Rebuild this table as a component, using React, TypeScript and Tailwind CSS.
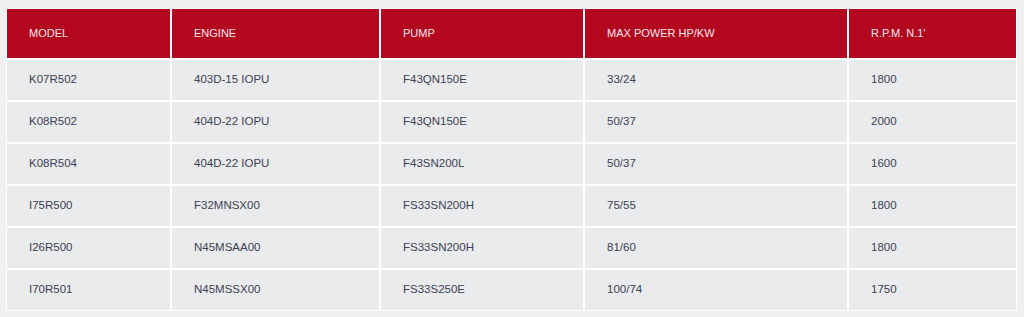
import React from "react";

const headers = ["MODEL", "ENGINE", "PUMP", "MAX POWER HP/KW", "R.P.M. N.1'"];
const rows = [
  ["K07R502", "403D-15 IOPU", "F43QN150E", "33/24", "1800"],
  ["K08R502", "404D-22 IOPU", "F43QN150E", "50/37", "2000"],
  ["K08R504", "404D-22 IOPU", "F43SN200L", "50/37", "1600"],
  ["I75R500", "F32MNSX00", "FS33SN200H", "75/55", "1800"],
  ["I26R500", "N45MSAA00", "FS33SN200H", "81/60", "1800"],
  ["I70R501", "N45MSSX00", "FS33S250E", "100/74", "1750"],
];

export default function App() {
  return (
    <div
      className="min-h-screen w-full bg-[#f0f0f1] pl-[6px] pt-[8px]"
      style={{ fontFamily: '"Liberation Sans", Arial, sans-serif' }}
    >
      <div className="inline-block border border-white bg-white">
        <div className="grid grid-cols-[163px_207px_202px_262px_167px] gap-[2px]">
          {headers.map((h) => (
            <div
              key={h}
              className="flex h-[49px] items-center bg-[#b3061f] pl-[22px] text-[11px] text-[#fbe8eb]"
            >
              {h}
            </div>
          ))}
          {rows.map((r, i) =>
            r.map((c, j) => (
              <div
                key={`${i}-${j}`}
                className="flex h-[40px] items-center bg-[#eaebed] pl-[22px] text-[11.5px] text-[#3d4154]"
              >
                {c}
              </div>
            ))
          )}
        </div>
      </div>
    </div>
  );
}
